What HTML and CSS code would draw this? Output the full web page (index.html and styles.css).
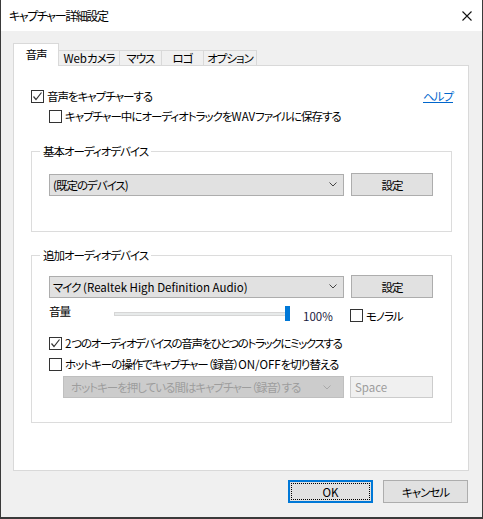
FILE: index.html
```html
<!DOCTYPE html>
<html lang="ja">
<head>
<meta charset="utf-8">
<link rel="stylesheet" href="styles.css">
</head>
<body>
<div class="window">
  <div class="titlebar">
    <span class="title">キャプチャー詳細設定</span>
    <svg class="close" width="10" height="10" viewBox="0 0 10 10"><path d="M0.5 0.5 L9.5 9.5 M9.5 0.5 L0.5 9.5" stroke="#111" stroke-width="1.1" fill="none"/></svg>
  </div>
  <div class="client">
    <div class="tabs">
      <div class="tab active">音声</div>
      <div class="tab w61"><span class="en">Web</span>カメラ</div>
      <div class="tab w42">マウス</div>
      <div class="tab w42">ロゴ</div>
      <div class="tab w53">オプション</div>
    </div>
    <div class="panel">
      <div class="row first">
        <label class="check"><span class="cb"><svg width="11" height="11" viewBox="0 0 11 11"><path d="M1.5 5.5 L4 8.5 L9.5 1.5" stroke="#333" stroke-width="1.2" fill="none"/></svg></span>音声をキャプチャーする</label>
        <a class="help">ヘルプ</a>
      </div>
      <div class="row indent">
        <label class="check"><span class="cb"></span>キャプチャー中にオーディオトラックを<span class="en">WAV</span>ファイルに保存する</label>
      </div>

      <fieldset class="group g1">
        <legend>基本オーディオデバイス</legend>
        <div class="devrow">
          <div class="combo"><span>(既定のデバイス)</span><svg class="chev" width="8" height="5" viewBox="0 0 8 5"><path d="M0.5 0.5 L4 4 L7.5 0.5" stroke="#444" fill="none"/></svg></div>
          <div class="btn">設定</div>
        </div>
      </fieldset>

      <fieldset class="group g2">
        <legend>追加オーディオデバイス</legend>
        <div class="devrow">
          <div class="combo"><span>マイク<span class="en"> (Realtek High Definition Audio)</span></span><svg class="chev" width="8" height="5" viewBox="0 0 8 5"><path d="M0.5 0.5 L4 4 L7.5 0.5" stroke="#444" fill="none"/></svg></div>
          <div class="btn">設定</div>
        </div>
        <div class="volrow">
          <span class="vlabel">音量</span>
          <div class="slider"><div class="track"></div><div class="thumb"></div></div>
          <span class="pct en">100%</span>
          <label class="check mono"><span class="cb"></span>モノラル</label>
        </div>
        <div class="optrow mix">
          <label class="check tight"><span class="cb"><svg width="11" height="11" viewBox="0 0 11 11"><path d="M1.5 5.5 L4 8.5 L9.5 1.5" stroke="#333" stroke-width="1.2" fill="none"/></svg></span><span class="en">2</span>つのオーディオデバイスの音声をひとつのトラックにミックスする</label>
        </div>
        <div class="optrow hot">
          <label class="check"><span class="cb"></span>ホットキーの操作でキャプチャー（録音）<span class="en">ON/OFF</span>を切り替える</label>
        </div>
        <div class="hotrow">
          <div class="combo disabled"><span>ホットキーを押している間はキャプチャー（録音）する</span><svg class="chev" width="8" height="5" viewBox="0 0 8 5"><path d="M0.5 0.5 L4 4 L7.5 0.5" stroke="#a8a8a8" fill="none"/></svg></div>
          <div class="field disabled en">Space</div>
        </div>
      </fieldset>
    </div>
    <div class="buttons">
      <div class="btn ok"><span class="en">OK</span></div>
      <div class="btn cancel">キャンセル</div>
    </div>
  </div>
</div>
</body>
</html>
```

FILE: styles.css
```css
* { box-sizing: border-box; }
html, body { margin: 0; padding: 0; }
body {
  font-family: "Noto Sans CJK JP", "Noto Sans", sans-serif;
  font-feature-settings: "palt";
  font-size: 11.5px;
  letter-spacing: -1px;
  color: #000;
  background: #2b2b2b;
}
.en { letter-spacing: 0; }
.window {
  width: 483px;
  height: 519px;
  border-left: 1px solid #3a3a3a;
  border-right: 1px solid #3a3a3a;
  border-bottom: 2px solid #3a3a3a;
  background: #f0f0f0;
  display: flex;
  flex-direction: column;
}
.titlebar {
  height: 31px;
  background: #fff;
  display: flex;
  align-items: center;
  justify-content: space-between;
  padding: 0 10px 0 8px;
}
.title { font-size: 12px; line-height: 16px; letter-spacing: -1.4px; }
.client {
  flex: 1;
  padding: 12px 13px 0 12px;
  display: flex;
  flex-direction: column;
}
.tabs {
  display: flex;
  align-items: flex-end;
  height: 22px;
  position: relative;
  z-index: 1;
}
.tab {
  height: 15px;
  border: 1px solid #d9d9d9;
  border-bottom: none;
  border-left: none;
  background: #f0f0f0;
  line-height: 14px;
  text-align: center;
  white-space: nowrap;
}
.tab.active {
  width: 46px;
  height: 23px;
  background: #fff;
  border-left: 1px solid #d9d9d9;
  line-height: 20px;
  margin-bottom: -1px;
}
.w61 { width: 61px; }
.w42 { width: 42px; }
.w53 { width: 53px; }
.panel {
  height: 406px;
  background: #fff;
  border: 1px solid #d9d9d9;
  padding: 0 16px 0 17px;
  display: flex;
  flex-direction: column;
}
.row {
  display: flex;
  align-items: center;
  justify-content: space-between;
  height: 16px;
}
.row.first { margin-top: 22px; }
.row.indent { margin-top: 4px; padding-left: 18px; }
.check {
  display: flex;
  align-items: center;
  line-height: 16px;
  white-space: nowrap;
}
.check.tight { letter-spacing: -1.35px; }
.cb {
  width: 13px;
  height: 13px;
  border: 1px solid #333;
  background: #fff;
  margin-right: 3px;
  display: flex;
  align-items: center;
  justify-content: center;
  flex: none;
}
.help {
  color: #0066cc;
  text-decoration: underline;
  margin-right: -1px;
}
.group {
  margin: 0;
  border: 1px solid #dcdcdc;
  padding: 0 17px 0 17px;
  min-width: 0;
}
.group legend {
  padding: 0 3px;
  margin-left: -9px;
  line-height: 16px;
  height: 16px;
}
.g1 { margin-top: 19px; height: 89px; }
.g1 .devrow { margin-top: 14px; }
.g2 { margin-top: 15px; height: 176px; }
.g2 .devrow { margin-top: 12px; }
.devrow { display: flex; align-items: center; gap: 7px; }
.combo {
  width: 295px;
  height: 22px;
  background: #e1e1e1;
  border: 1px solid #adadad;
  display: flex;
  align-items: center;
  justify-content: space-between;
  padding: 0 6px 0 3px;
  white-space: nowrap;
}
.btn {
  width: 82px;
  height: 23px;
  background: #e1e1e1;
  border: 1px solid #adadad;
  display: flex;
  align-items: center;
  justify-content: center;
}
.volrow {
  display: flex;
  align-items: center;
  height: 17px;
  margin-top: 7px;
}
.vlabel { width: 65px; margin-top: -6px; }
.slider {
  width: 176px;
  height: 15px;
  display: flex;
  align-items: center;
  position: relative;
}
.track {
  width: 100%;
  height: 4px;
  background: #e7eaea;
  border: 1px solid #d6d6d6;
}
.thumb {
  position: absolute;
  right: 0;
  top: 0;
  width: 5px;
  height: 15px;
  background: #0078d7;
}
.pct { margin-left: 13px; width: 47px; margin-top: 4px; color: #1a1a40; }
.mono { margin-top: 4px; }
.optrow { height: 16px; display: flex; align-items: center; }
.mix { margin-top: 13px; }
.hot { margin-top: 5px; }
.hotrow {
  display: flex;
  gap: 6px;
  margin-top: 4px;
  padding-left: 14px;
}
.combo.disabled {
  width: 281px;
  background: #cccccc;
  border-color: #bfbfbf;
  color: #9d9d9d;
  padding-left: 7px;
  padding-right: 12px;
}
.field.disabled {
  width: 83px;
  height: 22px;
  background: #f0f0f0;
  border: 1px solid #cccccc;
  color: #9d9d9d;
  line-height: 20px;
  padding-left: 4px;
}
.buttons {
  display: flex;
  justify-content: flex-end;
  gap: 10px;
  margin-top: 9px;
  padding-right: 1px;
}
.btn.ok {
  width: 85px;
  height: 23px;
  border: 2px solid #0078d7;
  padding: 1px;
}
.btn.ok span {
  width: 100%;
  height: 100%;
  border: 1px dotted #000;
  display: flex;
  align-items: center;
  justify-content: center;
}
.btn.cancel { width: 85px; height: 23px; }
```
